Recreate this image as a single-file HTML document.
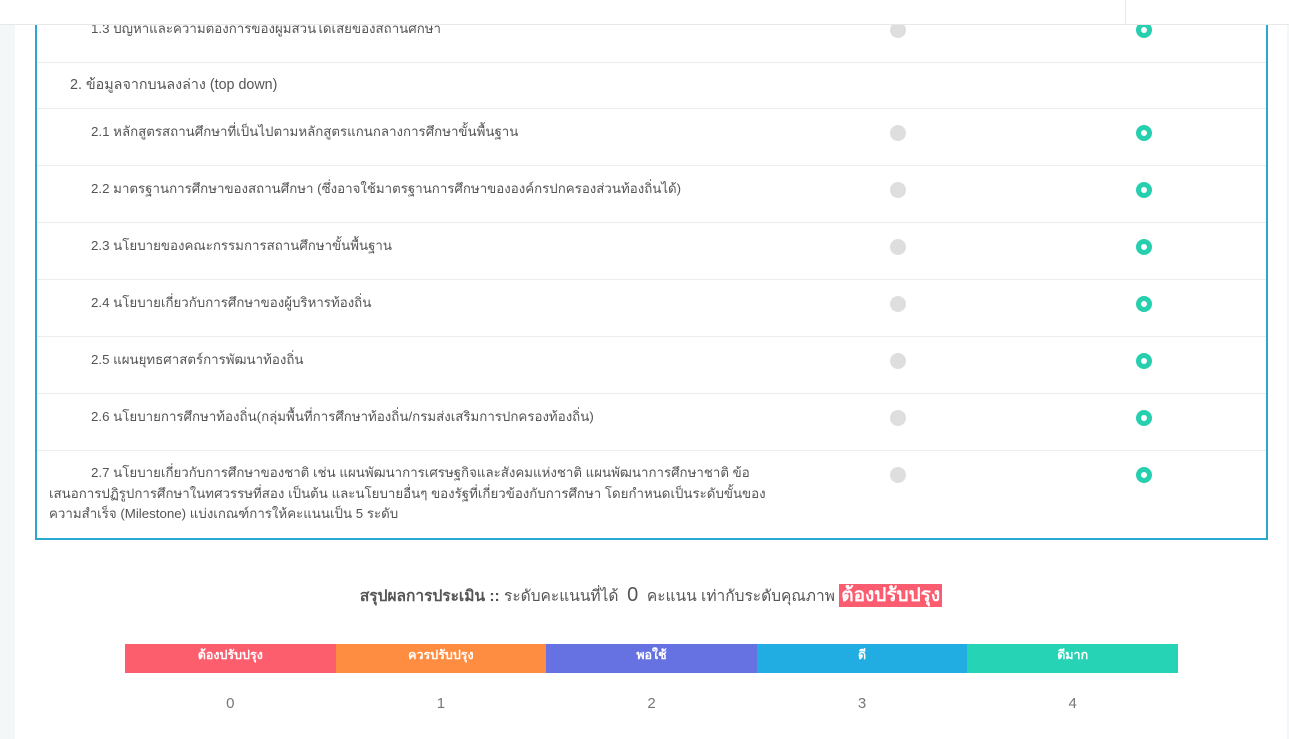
<!DOCTYPE html>
<html><head><meta charset="utf-8"><style>
*{margin:0;padding:0;box-sizing:border-box}
body{width:1289px;height:739px;overflow:hidden;background:#f4f7f8;font-family:"Liberation Sans","Noto Sans CJK SC",sans-serif;color:#555;position:relative}
.main{position:absolute;left:15px;top:0;width:1272px;height:739px;background:#fff}
.hdr{position:absolute;left:0;top:0;width:1289px;height:25px;background:#fff;border-bottom:1px solid #e8e8e8}
.hdr .v{position:absolute;left:1125px;top:0;width:1px;height:24px;background:#e6e6e6}
.box{position:absolute;left:35px;top:-10px;width:1233px;height:550px;border:2px solid #2ba8d2;border-top:none}
.row{position:absolute;left:37px;width:1229px;border-top:1px solid #ececec;font-size:13.3px;color:#555}
.t{position:absolute;left:0;top:0;line-height:19px;white-space:nowrap}
.g{position:absolute;left:853px;width:16px;height:16px;border-radius:50%;background:#dedede}
.r{position:absolute;left:1099px;width:16px;height:16px;border-radius:50%;background:#fff;border:5px solid #26cfae}
.sum{position:absolute;top:580px;left:0;width:1302px;text-align:center;font-size:15.5px;color:#555}
.bar{position:absolute;top:644px;left:125px;width:1053px;height:29px;display:flex}
.bar div{flex:1;color:#fff;font-size:12.5px;font-weight:bold;text-align:center;line-height:22px}
.nums{position:absolute;top:695px;left:125px;width:1053px;display:flex}
.nums div{flex:1;text-align:center;font-size:15px;color:#777}
</style></head><body>
<div class="main"></div>
<div class="box"></div>
<div class="row" style="top:17px;height:45px;border-top:none"><span class="t" style="left:54px;top:2px">1.3 ปัญหาและความต้องการของผู้มีส่วนได้เสียของสถานศึกษา</span><span class="g" style="top:5px"></span><span class="r" style="top:5px"></span></div>
<div class="hdr"><div class="v"></div></div>
<div class="row" style="top:62px;height:46px"><span class="t" style="left:33px;top:13px;font-size:14.3px">2. ข้อมูลจากบนลงล่าง (top down)</span></div>
<div class="row" style="top:108px;height:57px"><span class="t" style="left:54px;top:13px">2.1 หลักสูตรสถานศึกษาที่เป็นไปตามหลักสูตรแกนกลางการศึกษาขั้นพื้นฐาน</span><span class="g" style="top:16px"></span><span class="r" style="top:16px"></span></div>
<div class="row" style="top:165px;height:57px"><span class="t" style="left:54px;top:13px">2.2 มาตรฐานการศึกษาของสถานศึกษา (ซึ่งอาจใช้มาตรฐานการศึกษาขององค์กรปกครองส่วนท้องถิ่นได้)</span><span class="g" style="top:16px"></span><span class="r" style="top:16px"></span></div>
<div class="row" style="top:222px;height:57px"><span class="t" style="left:54px;top:13px">2.3 นโยบายของคณะกรรมการสถานศึกษาขั้นพื้นฐาน</span><span class="g" style="top:16px"></span><span class="r" style="top:16px"></span></div>
<div class="row" style="top:279px;height:57px"><span class="t" style="left:54px;top:13px">2.4 นโยบายเกี่ยวกับการศึกษาของผู้บริหารท้องถิ่น</span><span class="g" style="top:16px"></span><span class="r" style="top:16px"></span></div>
<div class="row" style="top:336px;height:57px"><span class="t" style="left:54px;top:13px">2.5 แผนยุทธศาสตร์การพัฒนาท้องถิ่น</span><span class="g" style="top:16px"></span><span class="r" style="top:16px"></span></div>
<div class="row" style="top:393px;height:57px"><span class="t" style="left:54px;top:13px">2.6 นโยบายการศึกษาท้องถิ่น(กลุ่มพื้นที่การศึกษาท้องถิ่น/กรมส่งเสริมการปกครองท้องถิ่น)</span><span class="g" style="top:16px"></span><span class="r" style="top:16px"></span></div>
<div class="row" style="top:450px;height:88px"><span class="t" style="left:12px;top:12px;line-height:20.5px"><span style="padding-left:42px">2.7 นโยบายเกี่ยวกับการศึกษาของชาติ เช่น แผนพัฒนาการเศรษฐกิจและสังคมแห่งชาติ แผนพัฒนาการศึกษาชาติ ข้อ</span><br>เสนอการปฏิรูปการศึกษาในทศวรรษที่สอง เป็นต้น และนโยบายอื่นๆ ของรัฐที่เกี่ยวข้องกับการศึกษา โดยกำหนดเป็นระดับขั้นของ<br>ความสำเร็จ (Milestone) แบ่งเกณฑ์การให้คะแนนเป็น 5 ระดับ</span><span class="g" style="top:16px"></span><span class="r" style="top:16px"></span></div>
<div class="sum"><b>สรุปผลการประเมิน ::</b> ระดับคะแนนที่ได้ &nbsp;<span style="font-size:20px">0</span>&nbsp; คะแนน เท่ากับระดับคุณภาพ <span style="background:#fc5c6f;color:#fff;font-weight:bold;font-size:19px;padding:1px 2px">ต้องปรับปรุง</span></div>
<div class="bar"><div style="background:#fd5e6e">ต้องปรับปรุง</div><div style="background:#fe8d42">ควรปรับปรุง</div><div style="background:#6672e2">พอใช้</div><div style="background:#21ade2">ดี</div><div style="background:#26d3b5">ดีมาก</div></div>
<div class="nums"><div>0</div><div>1</div><div>2</div><div>3</div><div>4</div></div>
</body></html>
